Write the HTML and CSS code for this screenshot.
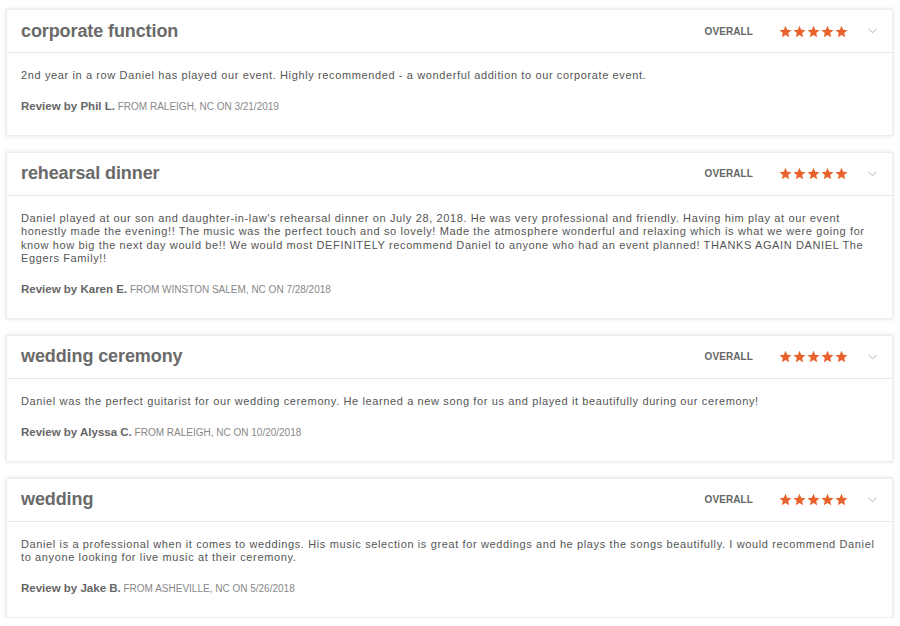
FILE: index.html
```html
<!DOCTYPE html>
<html lang="en">
<head>
    <meta charset="UTF-8">
    <meta name="viewport" content="width=device-width, initial-scale=1.0">
    <title>Reviews</title>
    <link rel="stylesheet" href="styles.css">
</head>
<body>
    <div class="reviews">
        <div class="review">
            <div class="review-head">
                <h2>corporate function</h2>
                <span class="overall">OVERALL</span>
                <span class="stars">
                    <svg viewBox="0 0 24 24"><path d="M12 1.5l3.1 7.3 7.9.7-6 5.2 1.8 7.8L12 18.4l-6.8 4.1 1.8-7.8-6-5.2 7.9-.7z"/></svg>
                    <svg viewBox="0 0 24 24"><path d="M12 1.5l3.1 7.3 7.9.7-6 5.2 1.8 7.8L12 18.4l-6.8 4.1 1.8-7.8-6-5.2 7.9-.7z"/></svg>
                    <svg viewBox="0 0 24 24"><path d="M12 1.5l3.1 7.3 7.9.7-6 5.2 1.8 7.8L12 18.4l-6.8 4.1 1.8-7.8-6-5.2 7.9-.7z"/></svg>
                    <svg viewBox="0 0 24 24"><path d="M12 1.5l3.1 7.3 7.9.7-6 5.2 1.8 7.8L12 18.4l-6.8 4.1 1.8-7.8-6-5.2 7.9-.7z"/></svg>
                    <svg viewBox="0 0 24 24"><path d="M12 1.5l3.1 7.3 7.9.7-6 5.2 1.8 7.8L12 18.4l-6.8 4.1 1.8-7.8-6-5.2 7.9-.7z"/></svg>
                </span>
                <svg class="chevron" viewBox="0 0 10 6"><path d="M0.5 0.5L5 5 9.5 0.5"/></svg>
            </div>
            <div class="review-body">
                <p>2nd year in a row Daniel has played our event. Highly recommended - a wonderful addition to our corporate event.</p>
                <div class="byline"><b>Review by Phil L.</b> <span>FROM RALEIGH, NC ON 3/21/2019</span></div>
            </div>
        </div>

        <div class="review">
            <div class="review-head">
                <h2>rehearsal dinner</h2>
                <span class="overall">OVERALL</span>
                <span class="stars">
                    <svg viewBox="0 0 24 24"><path d="M12 1.5l3.1 7.3 7.9.7-6 5.2 1.8 7.8L12 18.4l-6.8 4.1 1.8-7.8-6-5.2 7.9-.7z"/></svg>
                    <svg viewBox="0 0 24 24"><path d="M12 1.5l3.1 7.3 7.9.7-6 5.2 1.8 7.8L12 18.4l-6.8 4.1 1.8-7.8-6-5.2 7.9-.7z"/></svg>
                    <svg viewBox="0 0 24 24"><path d="M12 1.5l3.1 7.3 7.9.7-6 5.2 1.8 7.8L12 18.4l-6.8 4.1 1.8-7.8-6-5.2 7.9-.7z"/></svg>
                    <svg viewBox="0 0 24 24"><path d="M12 1.5l3.1 7.3 7.9.7-6 5.2 1.8 7.8L12 18.4l-6.8 4.1 1.8-7.8-6-5.2 7.9-.7z"/></svg>
                    <svg viewBox="0 0 24 24"><path d="M12 1.5l3.1 7.3 7.9.7-6 5.2 1.8 7.8L12 18.4l-6.8 4.1 1.8-7.8-6-5.2 7.9-.7z"/></svg>
                </span>
                <svg class="chevron" viewBox="0 0 10 6"><path d="M0.5 0.5L5 5 9.5 0.5"/></svg>
            </div>
            <div class="review-body">
                <p>Daniel played at our son and daughter-in-law's rehearsal dinner on July 28, 2018. He was very professional and friendly. Having him play at our event honestly made the evening!! The music was the perfect touch and so lovely! Made the atmosphere wonderful and relaxing which is what we were going for know how big the next day would be!! We would most DEFINITELY recommend Daniel to anyone who had an event planned! THANKS AGAIN DANIEL The Eggers Family!!</p>
                <div class="byline"><b>Review by Karen E.</b> <span>FROM WINSTON SALEM, NC ON 7/28/2018</span></div>
            </div>
        </div>

        <div class="review">
            <div class="review-head">
                <h2>wedding ceremony</h2>
                <span class="overall">OVERALL</span>
                <span class="stars">
                    <svg viewBox="0 0 24 24"><path d="M12 1.5l3.1 7.3 7.9.7-6 5.2 1.8 7.8L12 18.4l-6.8 4.1 1.8-7.8-6-5.2 7.9-.7z"/></svg>
                    <svg viewBox="0 0 24 24"><path d="M12 1.5l3.1 7.3 7.9.7-6 5.2 1.8 7.8L12 18.4l-6.8 4.1 1.8-7.8-6-5.2 7.9-.7z"/></svg>
                    <svg viewBox="0 0 24 24"><path d="M12 1.5l3.1 7.3 7.9.7-6 5.2 1.8 7.8L12 18.4l-6.8 4.1 1.8-7.8-6-5.2 7.9-.7z"/></svg>
                    <svg viewBox="0 0 24 24"><path d="M12 1.5l3.1 7.3 7.9.7-6 5.2 1.8 7.8L12 18.4l-6.8 4.1 1.8-7.8-6-5.2 7.9-.7z"/></svg>
                    <svg viewBox="0 0 24 24"><path d="M12 1.5l3.1 7.3 7.9.7-6 5.2 1.8 7.8L12 18.4l-6.8 4.1 1.8-7.8-6-5.2 7.9-.7z"/></svg>
                </span>
                <svg class="chevron" viewBox="0 0 10 6"><path d="M0.5 0.5L5 5 9.5 0.5"/></svg>
            </div>
            <div class="review-body">
                <p>Daniel was the perfect guitarist for our wedding ceremony. He learned a new song for us and played it beautifully during our ceremony!</p>
                <div class="byline"><b>Review by Alyssa C.</b> <span>FROM RALEIGH, NC ON 10/20/2018</span></div>
            </div>
        </div>

        <div class="review">
            <div class="review-head">
                <h2>wedding</h2>
                <span class="overall">OVERALL</span>
                <span class="stars">
                    <svg viewBox="0 0 24 24"><path d="M12 1.5l3.1 7.3 7.9.7-6 5.2 1.8 7.8L12 18.4l-6.8 4.1 1.8-7.8-6-5.2 7.9-.7z"/></svg>
                    <svg viewBox="0 0 24 24"><path d="M12 1.5l3.1 7.3 7.9.7-6 5.2 1.8 7.8L12 18.4l-6.8 4.1 1.8-7.8-6-5.2 7.9-.7z"/></svg>
                    <svg viewBox="0 0 24 24"><path d="M12 1.5l3.1 7.3 7.9.7-6 5.2 1.8 7.8L12 18.4l-6.8 4.1 1.8-7.8-6-5.2 7.9-.7z"/></svg>
                    <svg viewBox="0 0 24 24"><path d="M12 1.5l3.1 7.3 7.9.7-6 5.2 1.8 7.8L12 18.4l-6.8 4.1 1.8-7.8-6-5.2 7.9-.7z"/></svg>
                    <svg viewBox="0 0 24 24"><path d="M12 1.5l3.1 7.3 7.9.7-6 5.2 1.8 7.8L12 18.4l-6.8 4.1 1.8-7.8-6-5.2 7.9-.7z"/></svg>
                </span>
                <svg class="chevron" viewBox="0 0 10 6"><path d="M0.5 0.5L5 5 9.5 0.5"/></svg>
            </div>
            <div class="review-body">
                <p>Daniel is a professional when it comes to weddings. His music selection is great for weddings and he plays the songs beautifully. I would recommend Daniel to anyone looking for live music at their ceremony.</p>
                <div class="byline"><b>Review by Jake B.</b> <span>FROM ASHEVILLE, NC ON 5/26/2018</span></div>
            </div>
        </div>
    </div>
</body>
</html>
```

FILE: styles.css
```css
body {
    margin: 0;
    padding: 0;
    background-color: #fff;
    font-family: "Liberation Sans", Arial, sans-serif;
    color: #666;
}

.reviews {
    display: flex;
    flex-direction: column;
    gap: 16px;
    padding: 9px 7px 0 6px;
}

.review {
    background: #fff;
    border: 1px solid #ececec;
    box-shadow: 0 0 4px rgba(0, 0, 0, 0.12);
}

.review-head {
    display: flex;
    align-items: center;
    height: 42px;
    padding: 0 15px 0 14px;
    border-bottom: 1px solid #e6e6e6;
}

.review-head h2 {
    flex: 1;
    margin: 0;
    font-size: 18px;
    font-weight: bold;
    color: #6a6a6a;
    letter-spacing: -0.1px;
}

.overall {
    font-size: 10px;
    font-weight: bold;
    color: #666;
    letter-spacing: 0.1px;
    margin-right: 26px;
}

.stars {
    display: flex;
    gap: 1px;
    margin-right: 20px;
}

.stars svg {
    width: 13px;
    height: 13px;
    fill: #e8622c;
}

.chevron {
    width: 9px;
    height: 6px;
    fill: none;
    stroke: #aaa;
    stroke-width: 1;
}

.review-body {
    padding: 16px 14px 21px;
}

.review-body p {
    margin: 0 0 16px;
    font-size: 11px;
    line-height: 13.6px;
    letter-spacing: 0.62px;
    color: #555;
}

.byline {
    font-size: 10px;
    line-height: 14px;
    color: #888;
}

.byline b {
    font-size: 11.5px;
    color: #666;
}
```
